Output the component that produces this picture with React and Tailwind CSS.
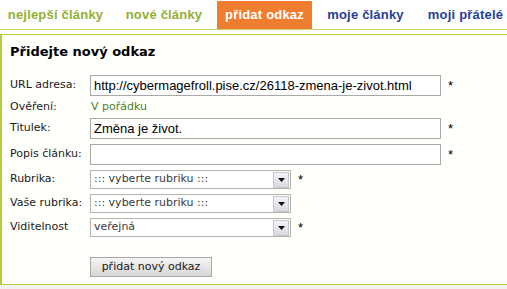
import React from "react";

const tabs = [
  { label: "nejlepší články", cls: "text-[#93b034] w-[111px]" },
  { label: "nové články", cls: "text-[#93b034] w-[92px] ml-[7px]" },
  { label: "přidat odkaz", cls: "text-white bg-[#ef7d30] w-[95px] ml-[7px]" },
  { label: "moje články", cls: "text-[#26409a] w-[93px] ml-[7px]" },
  { label: "moji přátelé", cls: "text-[#26409a] w-[91px] ml-[8px]" },
];

function Arrow() {
  return (
    <div className="flex h-[16px] w-[16px] items-center justify-center border border-[#c6c6cc] bg-gradient-to-b from-[#f4f4f6] to-[#d9d9df]">
      <svg width="7" height="4" viewBox="0 0 7 4">
        <path d="M0 0h7L3.5 4z" fill="#111" />
      </svg>
    </div>
  );
}

function Select({ value }) {
  return (
    <div className="flex h-[19px] w-[201px] items-center justify-between border border-[#b4b4b4] bg-white pl-[3px] pr-px">
      <span className="text-[11px] text-[#3a3a3a]">{value}</span>
      <Arrow />
    </div>
  );
}

function Input({ value, w = "w-[351px]" }) {
  return (
    <div
      className={`flex h-[21px] ${w} items-center border border-[#a9a9a9] bg-white pl-[3px] font-['Liberation_Sans',Arial,sans-serif] text-[13px] text-black`}
    >
      {value}
    </div>
  );
}

function Row({ label, children, star, h = "h-[21px]", mt = "mt-0" }) {
  return (
    <div className={`flex items-center ${h} ${mt}`}>
      <div className="w-[80px] text-[11px] text-[#1a1a1a]">{label}</div>
      {children}
      {star && <span className="ml-[7px] font-['Liberation_Sans',Arial,sans-serif] text-[13px] text-black">*</span>}
    </div>
  );
}

export default function App() {
  return (
    <div className="h-[289px] w-[507px] overflow-hidden bg-white font-['DejaVu_Sans',Verdana,sans-serif]">
      <div className="flex h-[30px] border-b border-[#c9d86a] pt-px">
        {tabs.map((t) => (
          <div
            key={t.label}
            className={`flex h-[28px] shrink-0 items-center justify-center whitespace-nowrap font-['Liberation_Sans',Arial,sans-serif] text-[13px] font-bold tracking-[0.2px] ${t.cls}`}
          >
            {t.label}
          </div>
        ))}
      </div>
      <div className="mt-[4px] h-[251px] border-b border-l-2 border-t border-[#b7cb45] bg-[#fffffb] pl-[8px] pt-[9px]">
        <div className="h-[16px] text-[13px] font-bold leading-[16px] text-black">Přidejte nový odkaz</div>
        <Row label="URL adresa:" star mt="mt-[15px]">
          <Input value="http://cybermagefroll.pise.cz/26118-zmena-je-zivot.html" />
        </Row>
        <Row label="Ověření:" h="h-[22px]">
          <span className="pl-px text-[11px] text-[#4d7f1d]">V pořádku</span>
        </Row>
        <Row label="Titulek:" star>
          <Input value="Změna je život." />
        </Row>
        <Row label="Popis článku:" star mt="mt-[5px]">
          <Input value="" />
        </Row>
        <Row label="Rubrika:" star h="h-[19px]" mt="mt-[5px]">
          <Select value="::: vyberte rubriku :::" />
        </Row>
        <Row label="Vaše rubrika:" h="h-[19px]" mt="mt-[5px]">
          <Select value="::: vyberte rubriku :::" />
        </Row>
        <Row label="Viditelnost" star h="h-[19px]" mt="mt-[5px]">
          <Select value="veřejná" />
        </Row>
        <div className="ml-[80px] mt-[20px] flex h-[20px] w-[122px] items-center justify-center border border-[#a8a8a8] bg-gradient-to-b from-[#f6f6f6] to-[#d6d6d6] text-[11px] text-[#1a1a1a]">
          přidat nový odkaz
        </div>
      </div>
      <div className="h-[10px] bg-[#f2f2f2]" />
    </div>
  );
}
